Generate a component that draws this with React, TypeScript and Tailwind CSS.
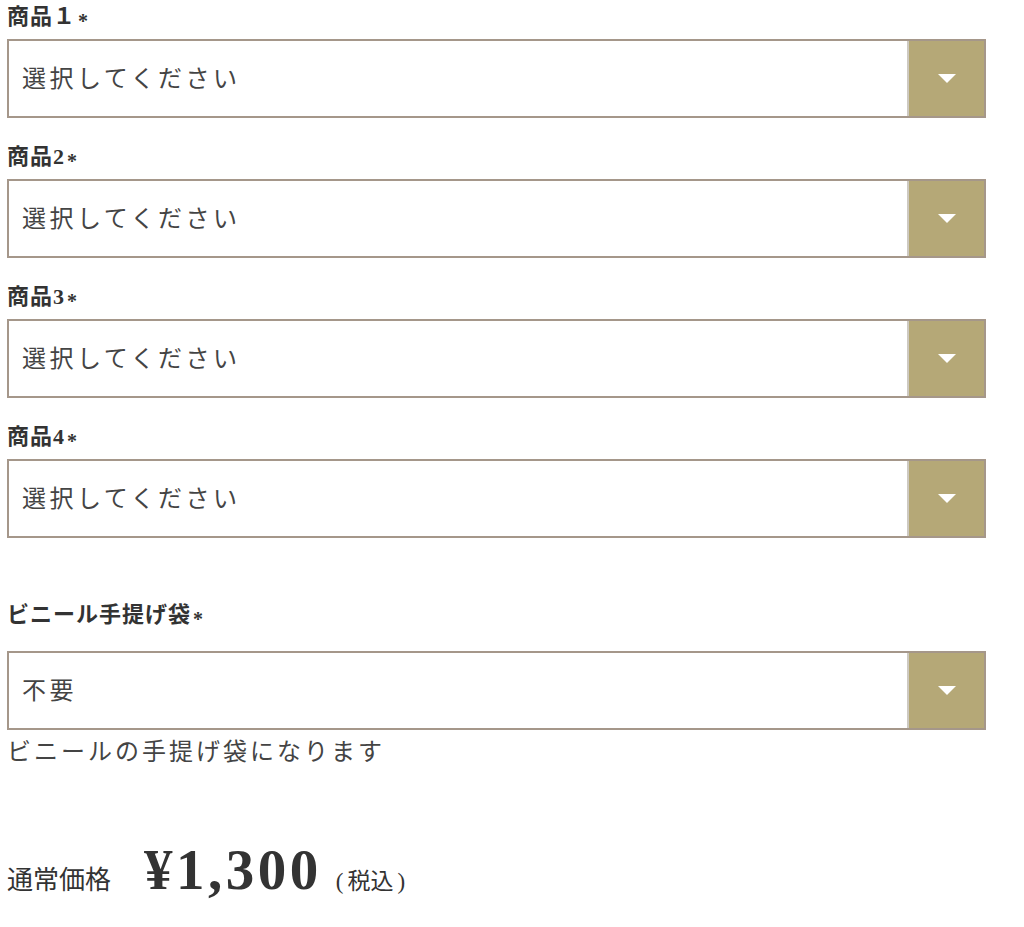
import React from 'react';

const SelectBox: React.FC<{ value: string }> = ({ value }) => {
  return (
    <div className="flex h-[79px] w-[979px] border-2 border-[#a5978a] bg-white">
      <div className="flex flex-1 items-center pl-[13px] text-[24px] leading-none tracking-[3.5px] text-[#444]">
        {value}
      </div>
      {/* arrow button */}
      <div className="flex w-[77px] items-center justify-center border-l-2 border-[#cdc9c1] bg-[#b5a877]">
        <div className="h-0 w-0 border-x-[9px] border-t-[9px] border-x-transparent border-t-white" />
      </div>
    </div>
  );
};

const Label: React.FC<{ text: string; className?: string }> = ({ text, className = '' }) => {
  return (
    <div className={`flex h-[34px] items-center text-[22px] font-bold leading-none tracking-[1px] text-[#333] ${className}`}>
      <span>{text}</span>
      <span className="ml-[2px] translate-y-[4px] text-[20px]">*</span>
    </div>
  );
};

const App: React.FC = () => {
  const items = ['商品１', '商品2', '商品3', '商品4'];

  return (
    <div className="min-h-screen bg-white pl-[7px] font-['Liberation_Serif','Noto_Sans_CJK_JP',serif]">
      {/* Product selects */}
      {items.map((item, i) => (
        <div key={item} className={i === 0 ? '' : 'mt-[22px]'}>
          <Label text={item} className="mb-[5px]" />
          <SelectBox value="選択してください" />
        </div>
      ))}

      {/* Bag option */}
      <Label text="ビニール手提げ袋" className="mt-[60px] mb-[19px]" />
      <SelectBox value="不要" />
      <p className="mt-[5px] h-[34px] text-[24px] leading-[34px] tracking-[3px] text-[#444]">
        ビニールの手提げ袋になります
      </p>

      {/* Price */}
      <div className="mt-[72px] flex h-[60px] items-baseline text-[#333]">
        <span className="text-[26px] leading-none">通常価格</span>
        <span className="ml-[33px] text-[57px] font-bold leading-none tracking-[3.5px]">¥1,300</span>
        <span className="ml-[14px] text-[23px] leading-none">
          (<span className="mx-[4px]">税込</span>)
        </span>
      </div>
    </div>
  );
};

export default App;
